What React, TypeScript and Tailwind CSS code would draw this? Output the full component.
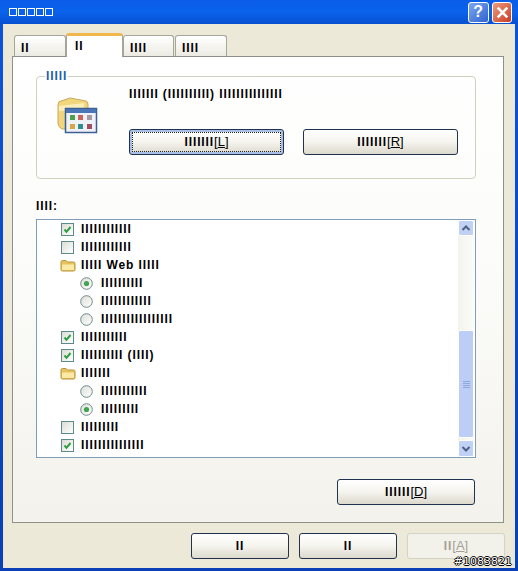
const font = { fontFamily: '"Liberation Sans", Arial, sans-serif' };

function XPButton({ children, width, focused, disabled }: { children: React.ReactNode; width: string; focused?: boolean; disabled?: boolean }) {
  const base = disabled
    ? "border-[#d4d2c6] text-[#a3a196] bg-[#f3f2ea]"
    : "border-[#1f3350] text-black bg-gradient-to-b from-white via-[#f5f4ee] to-[#dcd9cc]";
  return (
    <div className={`${width} h-[26px] shrink-0 rounded-[3px] border ${base} flex items-center justify-center text-[12px] font-bold ${focused ? "shadow-[inset_0_0_0_2px_#a9bfe6]" : ""}`}>
      {focused ? (
        <div className="w-[149px] h-[20px] border border-dotted border-[#222] flex items-center justify-center">{children}</div>
      ) : children}
    </div>
  );
}

function Hot({ t }: { t: string }) {
  return <span className="font-normal tracking-normal text-[13px]">[<span className="underline">{t}</span>]</span>;
}

function Check({ on }: { on?: boolean }) {
  return (
    <div className="w-[13px] h-[13px] shrink-0 border border-[#5c8a8a] bg-gradient-to-br from-[#dcdcd6] to-white">
      {on && (
        <svg viewBox="0 0 11 11" className="w-[11px] h-[11px]">
          <path d="M2.5 5.5 L4.5 7.8 L8.5 3" fill="none" stroke="#2f9e3f" strokeWidth="2" />
        </svg>
      )}
    </div>
  );
}

function Radio({ on }: { on?: boolean }) {
  return (
    <svg viewBox="0 0 13 13" className="w-[13px] h-[13px] shrink-0">
      <defs>
        <linearGradient id="rg" x1="0" y1="0" x2="1" y2="1">
          <stop offset="0" stopColor="#dcdcd6" />
          <stop offset="1" stopColor="#ffffff" />
        </linearGradient>
      </defs>
      <circle cx="6.5" cy="6.5" r="5.8" fill="url(#rg)" stroke="#6f8a8c" strokeWidth="1" />
      {on && <circle cx="6.5" cy="6.5" r="2.6" fill="#3fa552" />}
    </svg>
  );
}

function Folder() {
  return (
    <svg viewBox="0 0 16 13" className="w-[16px] h-[13px] shrink-0">
      <path d="M1 3 Q1 1.5 2.5 1.5 L6 1.5 L7.5 3 L13.5 3 Q15 3 15 4.5 L15 10.5 Q15 12 13.5 12 L2.5 12 Q1 12 1 10.5 Z" fill="#e6c35c" stroke="#b8933a" strokeWidth="1" />
      <path d="M2 5.5 L14 5.5 L14 10.5 Q14 11 13.5 11 L2.5 11 Q2 11 2 10.5 Z" fill="#fbeaa6" />
    </svg>
  );
}

type Row = { kind: "c" | "u" | "f" | "r" | "s"; text: string };
const rows: Row[] = [
  { kind: "c", text: "IIIIIIIIIIII" },
  { kind: "u", text: "IIIIIIIIIIII" },
  { kind: "f", text: "IIIII Web IIIII" },
  { kind: "s", text: "IIIIIIIIII" },
  { kind: "r", text: "IIIIIIIIIIII" },
  { kind: "r", text: "IIIIIIIIIIIIIIIII" },
  { kind: "c", text: "IIIIIIIIIII" },
  { kind: "c", text: "IIIIIIIIII (IIII)" },
  { kind: "f", text: "IIIIIII" },
  { kind: "r", text: "IIIIIIIIIII" },
  { kind: "s", text: "IIIIIIIII" },
  { kind: "u", text: "IIIIIIIII" },
  { kind: "c", text: "IIIIIIIIIIIIIII" },
];

function TreeRow({ kind, text }: Row) {
  const indent = kind === "r" || kind === "s" ? "pl-[43px] gap-[8px]" : kind === "f" ? "pl-[23px] gap-[5px]" : "pl-[24px] gap-[7px]";
  return (
    <div className={`h-[18px] flex items-center ${indent} text-[12px] font-bold text-black whitespace-nowrap`}>
      {kind === "c" && <Check on />}
      {kind === "u" && <Check />}
      {kind === "f" && <Folder />}
      {kind === "r" && <Radio />}
      {kind === "s" && <Radio on />}
      <span>{text}</span>
    </div>
  );
}

function Tab({ label, active, width }: { label: string; active?: boolean; width: string }) {
  return active ? (
    <div className={`${width} h-[24px] -mb-px z-10 relative rounded-t-[3px] bg-white border-t-[3px] border-t-[#f0b84c] border-x border-x-[#a5a599] text-[12px] leading-[14px] font-bold pl-[8px] pt-[3px] text-black`}>
      {label}
    </div>
  ) : (
    <div className={`${width} h-[21px] rounded-t-[3px] border border-b-0 border-[#a5a599] bg-gradient-to-b from-white to-[#ecebe2] text-[12px] font-bold pl-[6px] pt-[5px] leading-[14px] text-black`}>
      {label}
    </div>
  );
}

export default function App() {
  return (
    <div style={font} className="relative w-[518px] h-[571px] tracking-[0.9px] bg-gradient-to-b from-[#0a55de] to-[#0a3fb8] overflow-hidden flex flex-col">
      <div className="h-[24px] shrink-0 bg-gradient-to-b from-[#0a5ce8] via-[#0a62ec] to-[#0850d0] flex items-center pl-[9px] pr-[6px]">
        <span className="flex-1 flex gap-[1px]">
          {[0, 1, 2, 3, 4].map((i) => (
            <span key={i} className="w-[8px] h-[8px] border border-white" />
          ))}
        </span>
        <div className="w-[21px] h-[21px] rounded-[3px] border border-white bg-gradient-to-br from-[#7ea7ee] to-[#2f62cf] text-white text-[16px] font-bold flex items-center justify-center mr-[3px]">?</div>
        <div className="w-[20px] h-[21px] rounded-[3px] border border-white bg-gradient-to-br from-[#ee9a7e] to-[#c8381c] flex items-center justify-center">
          <svg viewBox="0 0 14 14" className="w-[15px] h-[15px]">
            <path d="M2.5 2.5 L11.5 11.5 M11.5 2.5 L2.5 11.5" stroke="#fff" strokeWidth="2.4" />
          </svg>
        </div>
      </div>

      <div className="flex-1 mx-[3px] mb-[3px] bg-[#ece9d8] px-[9px] pt-[9px] flex flex-col">
        <div className="flex pl-[2px] items-end">
          <Tab label="II" width="w-[52px]" />
          <Tab label="II" width="w-[57px]" active />
          <Tab label="IIII" width="w-[51px]" />
          <div className="w-[1px]" />
          <Tab label="IIII" width="w-[52px]" />
        </div>

        <div className="w-[492px] h-[467px] border border-[#8f9089] bg-gradient-to-b from-white via-[#fbfbf9] to-[#f3f2ec] pl-[23px] pr-[27px] pt-[12px] flex flex-col">
          <fieldset className="w-[440px] h-[110px] shrink-0 border border-[#d0d0bf] rounded-[4px] px-[8px] flex">
            <legend className="text-[12px] leading-[14px] font-bold text-[#1c5fa8] px-[1px]">IIIII</legend>
            <svg viewBox="0 0 42 40" className="w-[42px] h-[40px] ml-[11px] mt-[12px] shrink-0">
              <path d="M2 10 Q2 6 5 6 L14 3 L30 6 Q32 6 32 10 L32 34 L6 34 Q2 32 2 28 Z" fill="#f1d67e" stroke="#c9a85a" />
              <path d="M3 11 L28 8 L28 14 L3 16 Z" fill="#fbeeb8" />
              <rect x="9.5" y="13.5" width="31" height="24" fill="#eef1f6" stroke="#3c5f94" strokeWidth="1.5" />
              <rect x="10" y="14" width="30" height="4" fill="#4a76b8" />
              <rect x="14" y="20" width="5" height="5" fill="#4fa04a" />
              <rect x="22" y="20" width="5" height="5" fill="#c9655c" />
              <rect x="31" y="20" width="5" height="5" fill="#a89aa0" />
              <rect x="14" y="29" width="5" height="5" fill="#d8a64a" />
              <rect x="22" y="29" width="5" height="5" fill="#2f8f8f" />
              <rect x="31" y="29" width="5" height="5" fill="#a0505c" />
            </svg>
            <div className="ml-[31px] flex flex-col">
              <div className="text-[12px] leading-[14px] font-bold text-black whitespace-nowrap mt-[4px]">IIIIIII (IIIIIIIIII) IIIIIIIIIIIIIII</div>
              <div className="flex gap-[19px] mt-[28px]">
                <XPButton width="w-[155px]" focused>IIIIIII<Hot t="L" /></XPButton>
                <XPButton width="w-[155px]">IIIIIII<Hot t="R" /></XPButton>
              </div>
            </div>
          </fieldset>

          <div className="text-[12px] leading-[14px] font-bold text-black mt-[20px]">IIII:</div>
          <div className="w-[440px] h-[239px] mt-[6px] shrink-0 border border-[#7f9db9] bg-white flex">
            <div className="flex-1">
              {rows.map((r, i) => (
                <TreeRow key={i} {...r} />
              ))}
            </div>
            <div className="w-[16px] mr-[1px] shrink-0 bg-gradient-to-r from-[#f3f3ee] to-[#fbfbf8] flex flex-col">
              <div className="h-[16px] shrink-0 rounded-[2px] border border-white bg-[#c1d0f5] flex items-center justify-center">
                <svg viewBox="0 0 10 8" className="w-[10px] h-[8px]">
                  <path d="M1.5 6 L5 2.5 L8.5 6" fill="none" stroke="#4d6185" strokeWidth="2" />
                </svg>
              </div>
              <div className="h-[94px] shrink-0" />
              <div className="flex-1 rounded-[2px] border border-white bg-[#bccdf6] flex flex-col items-center justify-center gap-[1px]">
                {[0, 1, 2, 3].map((i) => (
                  <span key={i} className="w-[7px] h-px bg-[#8fa6d8]" />
                ))}
              </div>
              <div className="h-[2px] shrink-0" />
              <div className="h-[17px] shrink-0 rounded-[2px] border border-white bg-[#c1d0f5] flex items-center justify-center">
                <svg viewBox="0 0 10 8" className="w-[10px] h-[8px]">
                  <path d="M1.5 2 L5 5.5 L8.5 2" fill="none" stroke="#4d6185" strokeWidth="2" />
                </svg>
              </div>
            </div>
          </div>

          <div className="flex justify-end mt-[21px] w-[439px]">
            <XPButton width="w-[138px]">IIIIII<Hot t="D" /></XPButton>
          </div>
        </div>

        <div className="flex justify-end gap-[10px] mt-[10px] pr-[1px]">
          <XPButton width="w-[98px]">II</XPButton>
          <XPButton width="w-[98px]">II</XPButton>
          <XPButton width="w-[98px]" disabled>II<Hot t="A" /></XPButton>
        </div>
      </div>

      <div style={{ fontFamily: '"DejaVu Sans", sans-serif' }} className="absolute right-[6px] bottom-[2px] text-[11px] leading-[14px] tracking-normal text-white [text-shadow:1px_0_0_#000,-1px_0_0_#000,0_1px_0_#000,0_-1px_0_#000]">#1083821</div>
    </div>
  );
}
